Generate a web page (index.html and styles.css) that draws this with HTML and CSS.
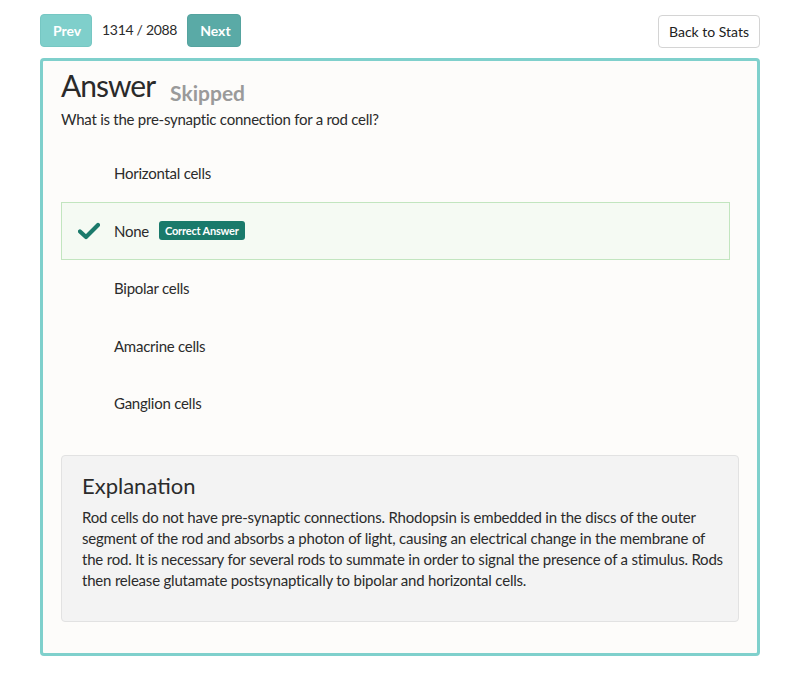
FILE: index.html
```html
<!DOCTYPE html>
<html>
<head>
<meta charset="utf-8">
<link rel="stylesheet" href="styles.css">
</head>
<body>
<div class="page">
  <div class="toolbar">
    <div class="nav">
      <button class="btn btn-prev">Prev</button>
      <span class="counter">1314 / 2088</span>
      <button class="btn btn-next">Next</button>
    </div>
    <button class="btn btn-back">Back to Stats</button>
  </div>
  <div class="card">
    <div class="title-row">
      <h1 class="title">Answer</h1>
      <span class="status">Skipped</span>
    </div>
    <p class="question">What is the pre-synaptic connection for a rod cell?</p>
    <ul class="options">
      <li class="option"><span class="icon"></span><span class="label">Horizontal cells</span></li>
      <li class="option correct">
        <span class="icon"><svg width="22" height="18" viewBox="0 0 22 18"><path d="M2 9.5 L8 15 L20 3" fill="none" stroke="#1b7a6b" stroke-width="4.2" stroke-linecap="round" stroke-linejoin="round"/></svg></span>
        <span class="label">None</span><span class="badge">Correct Answer</span>
      </li>
      <li class="option"><span class="icon"></span><span class="label">Bipolar cells</span></li>
      <li class="option"><span class="icon"></span><span class="label">Amacrine cells</span></li>
      <li class="option"><span class="icon"></span><span class="label">Ganglion cells</span></li>
    </ul>
    <div class="explanation">
      <h2 class="exp-title">Explanation</h2>
      <p class="exp-text">Rod cells do not have pre-synaptic connections. Rhodopsin is embedded in the discs of the outer segment of the rod and absorbs a photon of light, causing an electrical change in the membrane of the rod. It is necessary for several rods to summate in order to signal the presence of a stimulus. Rods then release glutamate postsynaptically to bipolar and horizontal cells.</p>
    </div>
  </div>
</div>
</body>
</html>
```

FILE: styles.css
```css
* { box-sizing: border-box; }
html, body { margin: 0; padding: 0; background: #ffffff; }
body {
  font-family: Lato, "Open Sans", "Liberation Sans", sans-serif;
  color: #2b2b2b;
  font-size: 15px;
}
.page {
  width: 720px;
  margin: 0 0 0 40px;
  padding-top: 14px;
}
.toolbar {
  display: flex;
  justify-content: space-between;
  align-items: center;
  height: 33px;
}
.nav { display: flex; align-items: center; }
.btn {
  font-family: inherit;
  height: 33px;
  border-radius: 4px;
  font-size: 14px;
  padding: 0 12px;
  border: 1px solid transparent;
  cursor: pointer;
}
.btn-prev {
  width: 52px;
  background: #7fcfcb;
  border-color: #76c7c3;
  color: #fff;
  font-weight: 700;
}
.btn-next {
  width: 54px;
  background: #5aaaa6;
  border-color: #55a39f;
  color: #fff;
  font-weight: 700;
}
.counter {
  margin: 0 10px;
  font-size: 14px;
  letter-spacing: -0.3px;
  color: #2b2b2b;
  padding-bottom: 2px;
}
.btn-back {
  width: 102px;
  margin-top: 1px;
  height: 33px;
  background: #fff;
  border-color: #d4d4d4;
  color: #222;
  font-size: 14px;
  padding: 0;
}
.card {
  margin-top: 11px;
  border: 3px solid #7fd0cc;
  border-radius: 4px;
  background: #fdfcfa;
  padding: 6px 18px 31px 18px;
}
.title-row {
  display: flex;
  align-items: baseline;
  height: 36px;
}
.title {
  margin: 0;
  font-size: 30px;
  font-weight: 400;
  letter-spacing: -1px;
  color: #2a2a2a;
  line-height: 36px;
}
.status {
  margin-left: 15px;
  font-size: 21px;
  font-weight: 700;
  color: #9a9a9a;
  position: relative;
  top: 4px;
}
.question {
  margin: 6px 0 0 0;
  line-height: 20px;
  letter-spacing: -0.25px;
}
.options {
  list-style: none;
  margin: 15px 9px 0 0;
  padding: 0;
  letter-spacing: -0.25px;
}
.option {
  display: flex;
  align-items: center;
  height: 58.5px;
  border: 1px solid transparent;
  padding-left: 16px;
  margin-bottom: -1px;
}
.option.correct {
  background: #f5faf3;
  border-color: #c2e5bf;
}
.icon {
  width: 36px;
  display: flex;
  align-items: center;
}
.label { line-height: 20px; }
.badge {
  margin-left: 10px;
  background: #1a7a6b;
  color: #fff;
  font-size: 11px;
  font-weight: 700;
  letter-spacing: -0.2px;
  padding: 0 6px;
  height: 19px;
  line-height: 19px;
  border-radius: 3px;
}
.explanation {
  margin-top: 23px;
  background: #f3f3f3;
  border: 1px solid #e2e2e2;
  border-radius: 4px;
  padding: 17px 15px 30px 20px;
}
.exp-title {
  margin: 0 0 8px 0;
  font-size: 22px;
  font-weight: 400;
  line-height: 26px;
  color: #2b2b2b;
}
.exp-text {
  margin: 0;
  line-height: 21px;
  font-size: 15px;
  letter-spacing: -0.2px;
}
```
